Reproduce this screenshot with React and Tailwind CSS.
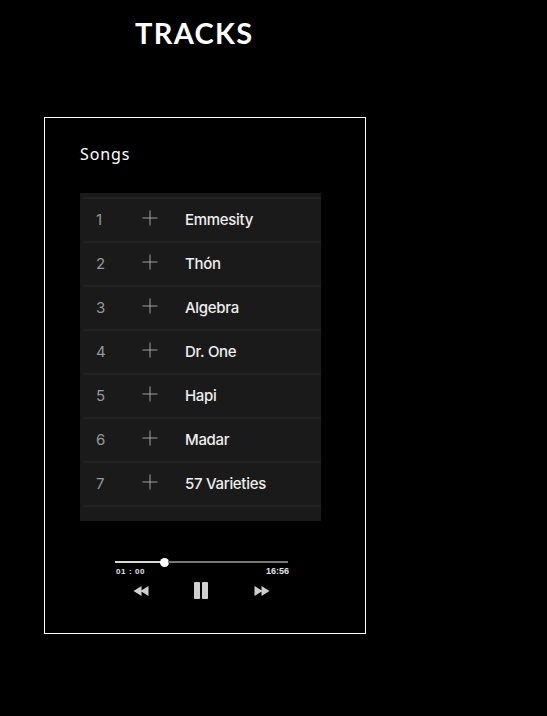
import React from 'react';

const songs = ['Emmesity', 'Thón', 'Algebra', 'Dr. One', 'Hapi', 'Madar', '57 Varieties'];

const PlusIcon = () => (
  <svg width="16" height="16" viewBox="0 0 16 16" className="block">
    <path d="M8 0.5V15.5M0.5 8H15.5" stroke="#a0a0a0" strokeWidth="1" fill="none" />
  </svg>
);

const SongRow = ({ number, title }) => (
  <div className="flex h-[44px] items-center border-b-2 border-[#222222] pl-[13px] pb-[2px]">
    <span className="mt-[2px] w-[14px] text-[15px] text-[#979797] font-['Inter',sans-serif]">{number}</span>
    <span className="ml-[32px] -mt-[2px]"><PlusIcon /></span>
    <span className="ml-[27px] mt-[2px] text-[15px] font-medium text-[#eeeeee] font-['Inter',sans-serif] tracking-[-0.3px]">{title}</span>
  </div>
);

const Player = () => (
  <div className="mt-[35px] ml-[35px] w-[173px]">
    <div className="flex h-[12px] items-center">
      <div className="h-[2px] w-[46px] bg-[#d8d8d8]" />
      <div className="h-[9px] w-[9px] rounded-full bg-white -mx-[1px] shrink-0" />
      <div className="h-[2px] flex-1 bg-[#777777]" />
    </div>
    <div className="-mt-[2px] flex justify-between text-[8px] leading-[10px] font-bold text-[#e4e4e4] font-['Liberation_Sans',sans-serif]">
      <span className="mt-[1px] pl-[1px] tracking-[0.6px]">01 : 00</span>
      <span className="-mr-[1px] text-[9px]">16:56</span>
    </div>
    <div className="mt-[5px] flex items-center justify-between pl-[18px] pr-[18px]">
      <svg width="16" height="10" viewBox="0 0 15 10" className="block">
        <path d="M0 5L8 0V10ZM7 5L15 0V10Z" fill="#cfcfcf" />
      </svg>
      <div className="-ml-[1px] flex gap-[2px]">
        <div className="h-[17px] w-[6px] rounded-[1px] bg-[#cfcfcf]" />
        <div className="h-[17px] w-[6px] rounded-[1px] bg-[#cfcfcf]" />
      </div>
      <svg width="16" height="10" viewBox="0 0 15 10" className="block">
        <path d="M15 5L7 0V10ZM8 5L0 0V10Z" fill="#cfcfcf" />
      </svg>
    </div>
  </div>
);

export default function App() {
  return (
    <div className="h-[716px] w-[547px] overflow-hidden bg-black pl-[44px]">
      <h1 className="w-[300px] pt-[15px] pl-[91px] text-[29px] leading-[36px] font-bold tracking-[1.3px] text-white font-['Lato',sans-serif]">
        TRACKS
      </h1>
      <div className="mt-[66px] h-[517px] w-[322px] border border-white pl-[35px]">
        <p className="mt-[25px] text-[16px] leading-[22px] tracking-[0.9px] text-white font-['Noto_Sans',sans-serif]">
          Songs
        </p>
        <div className="mt-[28px] h-[328px] w-[241px] bg-[#1a1a1a] pl-[3px] pt-[4px]">
          <div className="border-t-2 border-[#222222]">
            {songs.map((song, i) => (
              <SongRow key={song} number={i + 1} title={song} />
            ))}
          </div>
        </div>
        <Player />
      </div>
    </div>
  );
}
